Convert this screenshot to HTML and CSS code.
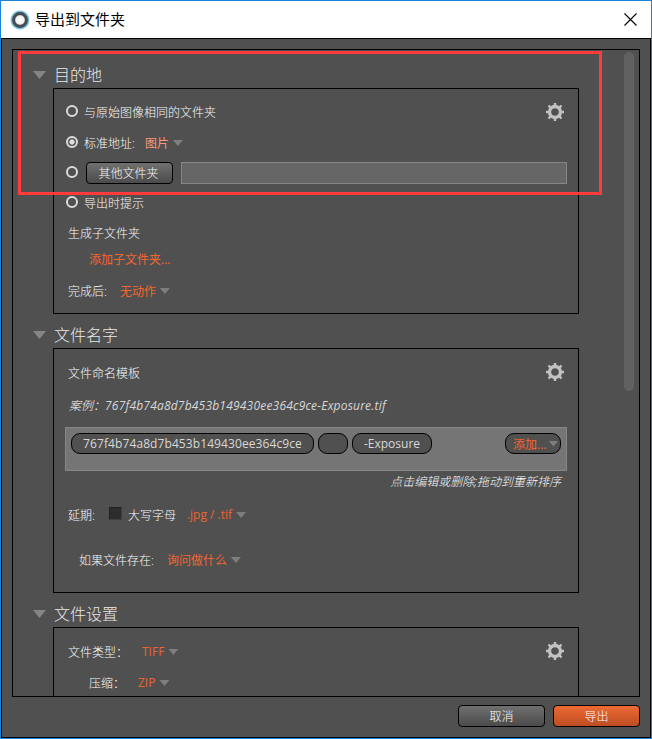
FILE: index.html
```html
<!DOCTYPE html>
<html lang="zh-CN">
<head>
<meta charset="utf-8">
<title>导出到文件夹</title>
<link rel="stylesheet" href="styles.css">
</head>
<body>
<svg width="0" height="0" class="defs">
  <defs>
    <radialGradient id="ring"><stop offset="0" stop-color="#fff"/><stop offset=".75" stop-color="#f4f4f4"/><stop offset="1" stop-color="#b8bcc0"/></radialGradient>
    <radialGradient id="halo"><stop offset=".78" stop-color="#56a9cb"/><stop offset="1" stop-color="#a9dcef"/></radialGradient>
    <symbol id="gear" viewBox="-9 -9 18 18">
      <circle r="5.5" fill="none" stroke="#c2c2c2" stroke-width="3.3"/>
      <g stroke="#c2c2c2" stroke-width="2.4">
        <path d="M0-6V-9M0 6V9M-6 0H-9M6 0H9"/>
        <path d="M4.4-4.4L6.5-6.5M-4.4 4.4L-6.5 6.5M-4.4-4.4L-6.5-6.5M4.4 4.4L6.5 6.5"/>
      </g>
    </symbol>
  </defs>
</svg>
<div class="window">
  <header class="titlebar">
    <svg class="logo" width="20" height="20" viewBox="0 0 20 20"><circle cx="10" cy="10" r="9.7" fill="url(#halo)"/><circle cx="10" cy="10" r="7.9" fill="#454b50"/><circle cx="10" cy="10" r="5" fill="url(#ring)"/></svg>
    <h1>导出到文件夹</h1>
    <svg class="close" width="13" height="13" viewBox="0 0 13 13"><path d="M.5.5l12 12M12.5.5l-12 12" stroke="#000" stroke-width="1.1"/></svg>
  </header>
  <main class="body">
    <div class="panel">
      <div class="sections">
        <h2 class="heading first"><i class="tri big"></i>目的地</h2>
        <section class="box destination">
          <svg class="gear"><use href="#gear"/></svg>
          <div class="row"><i class="radio"></i><span>与原始图像相同的文件夹</span></div>
          <div class="row"><i class="radio on"></i><span>标准地址:</span><span class="link soft">图片</span><i class="tri"></i></div>
          <div class="row"><i class="radio"></i><button class="btn other">其他文件夹</button><div class="field"></div></div>
          <div class="row"><i class="radio"></i><span>导出时提示</span></div>
          <div class="row plain"><span>生成子文件夹</span></div>
          <div class="row sub"><span class="link">添加子文件夹...</span></div>
          <div class="row plain"><span>完成后:</span><span class="link after">无动作</span><i class="tri"></i></div>
        </section>
        <h2 class="heading"><i class="tri big"></i>文件名字</h2>
        <section class="box naming">
          <svg class="gear"><use href="#gear"/></svg>
          <div class="row plain"><span>文件命名模板</span></div>
          <div class="row plain example">案例：<b class="sample">767f4b74a8d7b453b149430ee364c9ce-Exposure.tif</b></div>
          <div class="template">
            <b class="pill hash">767f4b74a8d7b453b149430ee364c9ce</b>
            <b class="pill blank"></b>
            <b class="pill suffix">-Exposure</b>
            <span class="pill add"><span>添加...</span><i class="tri"></i></span>
          </div>
          <div class="row hint">点击编辑或删除;拖动到重新排序</div>
          <div class="row plain"><span>延期:</span><i class="check"></i><span>大写字母</span><b class="link ext">.jpg / .tif</b><i class="tri"></i></div>
          <div class="row exists"><span>如果文件存在:</span><span class="link ask">询问做什么</span><i class="tri"></i></div>
        </section>
        <h2 class="heading"><i class="tri big"></i>文件设置</h2>
        <section class="box settings">
          <svg class="gear"><use href="#gear"/></svg>
          <div class="row plain"><span class="type">文件类型：</span><b class="link">TIFF</b><i class="tri"></i></div>
          <div class="row compress"><span class="zip">压缩：</span><b class="link">ZIP</b><i class="tri"></i></div>
        </section>
      </div>
      <div class="scroll"></div>
    </div>
    <footer class="actions">
      <button class="btn">取消</button>
      <button class="btn primary">导出</button>
    </footer>
  </main>
  <div class="highlight"></div>
</div>
</body>
</html>
```
FILE: styles.css
```css
* { box-sizing: border-box; }
body {
  margin: 0;
  font: 300 12px/16px "Open Sans", "Noto Sans CJK SC", sans-serif;
  color: #fafafa;
}
b { font-weight: 400; color: #d8d8d8; }
.defs { position: absolute; }
h1, h2 { margin: 0; font-weight: 300; }
.window {
  position: relative;
  display: flex;
  flex-direction: column;
  width: 652px;
  height: 739px;
  border: 1px solid #1883d7;
  background: #505050;
}
.titlebar {
  display: flex;
  align-items: center;
  height: 37px;
  padding: 0 14px 0 9px;
  background: #fff;
  color: #000;
}
.titlebar h1 {
  margin-left: 5px;
  padding-bottom: 1px;
  font: 400 15px/20px "Noto Sans CJK SC", sans-serif;
}
.close { margin-left: auto; }
.body {
  flex: 1;
  min-height: 0;
  border: 1px solid #000;
  padding: 10px;
}
.panel {
  display: flex;
  justify-content: space-between;
  width: 628px;
  height: 648px;
  border: 1px solid #000;
  overflow: hidden;
}
.sections { width: 566px; padding-left: 20px; flex: none; }
.scroll {
  width: 10px;
  height: 339px;
  margin: 2px 5px 0 0;
  border-radius: 5px;
  background: #616161;
}
.heading {
  display: flex;
  align-items: center;
  height: 34px;
  padding-top: 8px;
  font-size: 16px;
  line-height: 20px;
  color: #e8e8e8;
}
.heading.first { height: 38px; padding-top: 12px; }
.tri {
  width: 10px;
  height: 6px;
  margin-left: 4px;
  background: #7e7e7e;
  clip-path: polygon(0 0, 100% 0, 50% 100%);
}
.tri.big { width: 13px; height: 8px; margin: 0 8px 0 0; background: #858585; }
.box {
  position: relative;
  display: grid;
  width: 526px;
  margin-left: 20px;
  padding-top: 8px;
  border: 1px solid #000;
}
.destination { height: 226px; grid-template-rows: 30px 32px 28px 32px 28px 24px 40px; }
.naming { height: 245px; grid-template-rows: 32px 38px 44px 22px 44px 46px; }
.settings { height: 100px; grid-template-rows: 32px 30px; }
.gear { position: absolute; top: 14px; right: 14px; width: 18px; height: 18px; }
.row { display: flex; align-items: center; padding-left: 12px; white-space: pre; }
.row > span { padding-top: 2px; }
.plain { padding-left: 14px; }
.radio {
  width: 12px;
  height: 12px;
  margin: -2px 6px 0 0;
  border: 2px solid #dcdcdc;
  border-radius: 50%;
}
.radio.on { background: radial-gradient(circle, #dcdcdc 2.3px, transparent 3px); }
.link { color: #f4662f; font-weight: 400; }
b.link { color: #ea642f; }
.soft { color: #f79a78; margin-left: 10px; }
.btn {
  width: 87px;
  height: 22px;
  padding: 2px 0 0;
  border: 1px solid #000;
  border-radius: 4px;
  background: linear-gradient(#707070, #4b4b4b);
  color: #fafafa;
  font: inherit;
  line-height: 18px;
}
.other { margin-left: 2px; padding-right: 2px; }
.field {
  width: 386px;
  height: 22px;
  margin-left: 8px;
  border: 1px solid #868686;
  background: #666;
}
.sub { padding-left: 35px; }
.after { margin-left: 13px; }
.example { font-style: italic; padding-left: 15px; padding-bottom: 4px; }
.sample { letter-spacing: .2px; }
.template {
  display: flex;
  gap: 4px;
  width: 502px;
  margin-left: 11px;
  padding: 5px;
  border: 1px solid #868686;
  background: #757575;
}
.pill {
  height: 21px;
  border: 1px solid #000;
  border-radius: 9px;
  background: #505050;
  text-align: center;
  line-height: 19px;
}
.hash { width: 243px; letter-spacing: .09px; }
.blank { width: 30px; }
.suffix { width: 80px; }
.add {
  display: flex;
  align-items: center;
  width: 56px;
  margin-left: auto;
  padding-left: 7px;
  color: #f4662f;
  font-weight: 400;
}
.add > span { padding-top: 1px; }
.add .tri { margin-left: 2px; flex: none; }
.hint { justify-content: flex-end; padding-right: 17px; font-style: italic; }
.check {
  width: 13px;
  height: 13px;
  margin: -4px 6px 0 14px;
  border: 1px solid #222;
  border-right-color: #404040;
  border-bottom-color: #404040;
  background: #2d2d2d;
}
.ext { margin-left: 11px; }
.exists { padding-left: 25px; }
.ask { margin-left: 13px; }
.type { width: 74px; }
.compress { padding-left: 35px; }
.zip { width: 49px; }
.actions { display: flex; justify-content: flex-end; gap: 8px; padding-top: 8px; }
.primary { background: linear-gradient(#ee6a35, #bd4d22); }
.highlight {
  position: absolute;
  left: 17px;
  top: 50px;
  width: 584px;
  height: 144px;
  border: 3px solid #ff3b3b;
}
```
